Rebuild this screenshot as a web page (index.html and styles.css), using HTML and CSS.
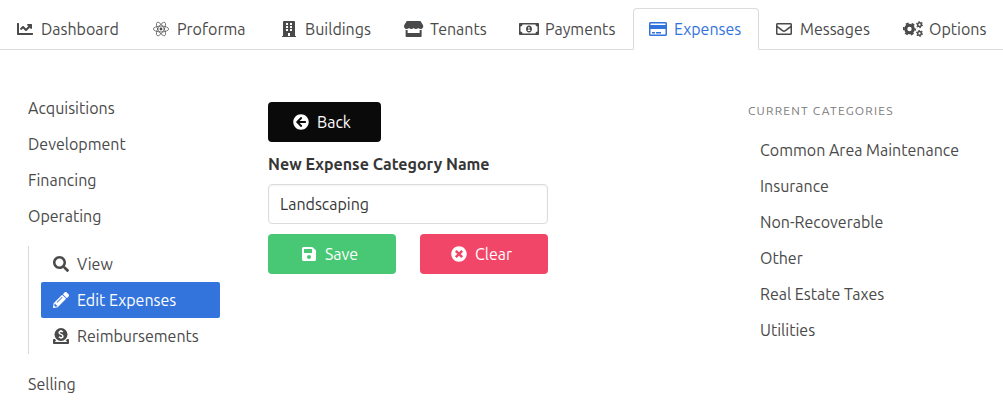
FILE: index.html
```html
<!DOCTYPE html>
<html lang="en">
<head>
<meta charset="utf-8">
<title>Expenses</title>
<link rel="stylesheet" href="styles.css">
</head>
<body>
<nav class="tabs" aria-label="Main">
  <a class="tab" href="#"><span class="icon"><svg viewBox="0 0 512 512"><path d="M496 384H64V80c0-8.840-7.160-16-16-16H16C7.160 64 0 71.160 0 80v336c0 17.670 14.330 32 32 32h464c8.840 0 16-7.160 16-16v-32c0-8.840-7.160-16-16-16zM464 96H345.940c-21.380 0-32.090 25.850-16.970 40.970l32.400 32.400L288 242.750l-73.370-73.370c-12.500-12.500-32.760-12.500-45.250 0l-68.690 68.690c-6.250 6.250-6.250 16.380 0 22.630l22.620 22.620c6.250 6.250 16.380 6.250 22.630 0L192 237.250l73.370 73.370c12.500 12.500 32.760 12.500 45.250 0l96-96 32.400 32.400c15.120 15.120 40.970 4.410 40.970-16.970V112c0-8.840-7.160-16-16-16z"/></svg></span>Dashboard</a>
  <a class="tab" href="#"><span class="icon"><svg viewBox="0 0 512 512"><g fill="none" stroke="currentColor" stroke-width="22"><ellipse cx="256" cy="256" rx="244" ry="94"/><ellipse cx="256" cy="256" rx="244" ry="94" transform="rotate(60 256 256)"/><ellipse cx="256" cy="256" rx="244" ry="94" transform="rotate(120 256 256)"/></g><circle cx="256" cy="256" r="45"/></svg></span>Proforma</a>
  <a class="tab" href="#"><span class="icon"><svg viewBox="0 0 448 512"><path fill-rule="evenodd" d="M436 480h-20V24c0-13-11-24-24-24H56C43 0 32 11 32 24v456H12c-7 0-12 5-12 12v20h448v-20c0-7-5-12-12-12zM128 64h64v64h-64zM256 64h64v64h-64zM128 160h64v64h-64zM256 160h64v64h-64zM128 256h64v64h-64zM256 256h64v64h-64zM192 384h64v96h-64z"/></svg></span>Buildings</a>
  <a class="tab" href="#"><span class="icon"><svg viewBox="0 0 616 512"><path d="M602 118.600L537.100 15C531.300 5.700 521 0 510 0H106C95 0 84.700 5.700 78.900 15L14 118.600c-33.500 53.500-3.800 127.900 58.800 136.400 4.500.6 9.100.9 13.700.9 29.600 0 55.800-13 73.800-33.100 18 20.100 44.300 33.100 73.800 33.100 29.600 0 55.800-13 73.800-33.100 18 20.100 44.300 33.100 73.800 33.100 29.600 0 55.800-13 73.800-33.100 18.100 20.100 44.300 33.100 73.800 33.100 4.700 0 9.200-.3 13.700-.9 62.800-8.400 92.600-82.800 59-136.400zM529.500 288c-10 0-19.900-1.500-29.500-3.800V384H116v-99.800c-9.600 2.200-19.500 3.800-29.500 3.800-6 0-12.100-.4-18-1.200-5.600-.8-11.100-2.100-16.400-3.600V480c0 17.700 14.300 32 32 32h448c17.700 0 32-14.300 32-32V283.200c-5.400 1.600-10.800 2.900-16.400 3.600-6.100.8-12.100 1.200-18.200 1.200z"/></svg></span>Tenants</a>
  <a class="tab" href="#"><span class="icon"><svg viewBox="0 0 640 512"><path fill-rule="evenodd" d="M608 64H32C14 64 0 78 0 96v320c0 18 14 32 32 32h576c18 0 32-14 32-32V96c0-18-14-32-32-32zm-16 272c-35 0-64 29-64 64H112c0-35-29-64-64-64V176c35 0 64-29 64-64h416c0 35 29 64 64 64z"/><path fill-rule="evenodd" d="M320 144c-53 0-96 50-96 112s43 112 96 112 96-50 96-112-43-112-96-112zm-40 176v-32h24v-56h-20v-26l34-14h18v96h24v32z"/></svg></span>Payments</a>
  <a class="tab tab-active" href="#" aria-current="page"><span class="icon"><svg viewBox="0 0 576 512"><path fill-rule="evenodd" d="M528 32H48C21 32 0 54 0 80v352c0 26 21 48 48 48h480c27 0 48-22 48-48V80c0-26-21-48-48-48zM54 80h468c3 0 6 3 6 6v42H48V86c0-3 3-6 6-6zm468 352H54c-3 0-6-3-6-6V256h480v170c0 3-3 6-6 6z"/><path d="M96 352h96v48H96zM224 352h160v48H224z"/></svg></span>Expenses</a>
  <a class="tab" href="#"><span class="icon"><svg viewBox="0 0 512 512"><path d="M464 64H48C21.490 64 0 85.490 0 112v288c0 26.510 21.490 48 48 48h416c26.510 0 48-21.490 48-48V112c0-26.510-21.490-48-48-48zm0 48v40.805c-22.422 18.259-58.168 46.651-134.587 106.490-16.841 13.247-50.201 45.072-73.413 44.701-23.208.375-56.579-31.459-73.413-44.701C106.180 199.465 70.425 171.067 48 152.805V112h416zM48 400V214.398c22.914 18.251 55.409 43.862 104.938 82.646 21.857 17.205 60.134 55.186 103.062 54.955 42.717.231 80.509-37.199 103.053-54.947 49.528-38.783 82.032-64.401 104.947-82.653V400H48z"/></svg></span>Messages</a>
  <a class="tab" href="#"><span class="icon"><svg viewBox="0 0 640 512"><g fill="none" stroke="currentColor"><circle cx="208" cy="256" r="120" stroke-width="100"/><circle cx="208" cy="256" r="184" stroke-width="56" stroke-dasharray="96 96.700" stroke-dashoffset="48"/><circle cx="528" cy="116" r="58" stroke-width="46"/><circle cx="528" cy="116" r="94" stroke-width="36" stroke-dasharray="49 49.400"/><circle cx="528" cy="396" r="58" stroke-width="46"/><circle cx="528" cy="396" r="94" stroke-width="36" stroke-dasharray="49 49.400"/></g></svg></span>Options</a>
</nav>

<main class="columns">
  <aside class="sidebar">
    <ul class="menu">
      <li><a class="menu-link" href="#">Acquisitions</a></li>
      <li><a class="menu-link" href="#">Development</a></li>
      <li><a class="menu-link" href="#">Financing</a></li>
      <li><a class="menu-link" href="#">Operating</a>
        <ul class="submenu">
          <li><a class="menu-link" href="#"><span class="icon"><svg viewBox="0 0 512 512"><path d="M505 442.700L405.300 343c-4.500-4.500-10.600-7-17-7H372c27.600-35.300 44-79.700 44-128C416 93.100 322.900 0 208 0S0 93.100 0 208s93.100 208 208 208c48.300 0 92.700-16.400 128-44v16.300c0 6.400 2.500 12.500 7 17l99.700 99.700c9.400 9.400 24.600 9.400 33.900 0l28.300-28.300c9.400-9.400 9.400-24.600.1-34zM208 336c-70.700 0-128-57.200-128-128 0-70.700 57.200-128 128-128 70.700 0 128 57.200 128 128 0 70.700-57.200 128-128 128z"/></svg></span>View</a></li>
          <li><a class="menu-link menu-link-active" href="#" aria-current="page"><span class="icon"><svg viewBox="0 0 512 512"><path d="M497.900 142.100l-46.100 46.100c-4.700 4.700-12.300 4.700-17 0l-111-111c-4.700-4.700-4.700-12.300 0-17l46.100-46.100c18.700-18.700 49.100-18.700 67.900 0l60.100 60.100c18.800 18.700 18.800 49.100 0 67.900zM284.200 99.800L21.600 362.400.4 483.900c-2.900 16.400 11.400 30.600 27.800 27.800l121.500-21.300 262.600-262.600c4.700-4.700 4.700-12.300 0-17l-111-111c-4.800-4.700-12.400-4.700-17.100 0zM124.100 339.900c-5.500-5.500-5.500-14.300 0-19.800l154-154c5.500-5.500 14.300-5.500 19.800 0s5.500 14.300 0 19.800l-154 154c-5.500 5.500-14.300 5.500-19.800 0zM88 424h48v36.300l-64.500 11.300-31.100-31.100L51.700 376H88v48z"/></svg></span>Edit Expenses</a></li>
          <li><a class="menu-link" href="#"><span class="icon"><svg viewBox="0 0 512 512"><circle cx="256" cy="208" r="208"/><path class="cutout" d="M318 130c-20-18-42-25-64-25-38 0-61 20-61 47 0 66 126 42 126 109 0 29-25 48-64 48-25 0-48-9-65-27M256 66v40M256 308v38"/><path d="M480 352h-32c-10 24-26 46-45 64h28c6 0 10 4 10 8v16c0 4-4 8-10 8H81c-6 0-10-4-10-8v-16c0-4 4-8 10-8h28c-19-18-35-40-45-64H32c-18 0-32 14-32 32v96c0 18 14 32 32 32h448c18 0 32-14 32-32v-96c0-18-14-32-32-32z"/></svg></span>Reimbursements</a></li>
        </ul>
      </li>
      <li><a class="menu-link" href="#">Selling</a></li>
    </ul>
  </aside>

  <form class="form">
    <button class="button button-back" type="button"><span class="icon"><svg viewBox="0 0 512 512"><path d="M256 504C119 504 8 393 8 256S119 8 256 8s248 111 248 248-111 248-248 248zm28.900-143.600L209.400 288H392c13.300 0 24-10.700 24-24v-16c0-13.300-10.700-24-24-24H209.400l75.500-72.400c9.700-9.300 9.900-24.800.4-34.300l-11-10.900c-9.400-9.400-24.600-9.400-33.900 0L107.700 239c-9.400 9.400-9.400 24.600 0 33.900l132.700 132.700c9.400 9.400 24.600 9.400 33.900 0l11-10.900c9.500-9.500 9.300-25-.4-34.300z"/></svg></span>Back</button>
    <label class="label" for="category">New Expense Category Name</label>
    <input class="input" id="category" type="text" value="Landscaping">
    <div class="actions">
      <button class="button button-save" type="submit"><span class="icon"><svg viewBox="0 0 448 512"><path d="M433.941 129.941l-83.882-83.882A48 48 0 0 0 316.118 32H48C21.490 32 0 53.490 0 80v352c0 26.510 21.490 48 48 48h352c26.510 0 48-21.490 48-48V163.882a48 48 0 0 0-14.059-33.941zM224 416c-35.346 0-64-28.654-64-64 0-35.346 28.654-64 64-64s64 28.654 64 64c0 35.346-28.654 64-64 64zm96-304.520V212c0 6.627-5.373 12-12 12H76c-6.627 0-12-5.373-12-12V108c0-6.627 5.373-12 12-12h228.520c3.183 0 6.235 1.264 8.485 3.515l3.480 3.480A11.996 11.996 0 0 1 320 111.480z"/></svg></span>Save</button>
      <button class="button button-clear" type="reset"><span class="icon"><svg viewBox="0 0 512 512"><path d="M256 8C119 8 8 119 8 256s111 248 248 248 248-111 248-248S393 8 256 8zm121.600 313.100c4.700 4.700 4.700 12.300 0 17L338 377.600c-4.700 4.700-12.300 4.700-17 0L256 312l-65.100 65.600c-4.700 4.700-12.300 4.700-17 0L134.400 338c-4.700-4.700-4.700-12.300 0-17l65.600-65-65.600-65.100c-4.700-4.700-4.700-12.300 0-17l39.600-39.600c4.700-4.700 12.300-4.700 17 0l65 65.700 65.100-65.600c4.700-4.700 12.300-4.700 17 0l39.600 39.600c4.700 4.700 4.700 12.300 0 17L312 256l65.600 65.100z"/></svg></span>Clear</button>
    </div>
  </form>

  <section class="categories">
    <h2 class="categories-title">Current Categories</h2>
    <ul class="categories-list">
      <li>Common Area Maintenance</li>
      <li>Insurance</li>
      <li>Non-Recoverable</li>
      <li>Other</li>
      <li>Real Estate Taxes</li>
      <li>Utilities</li>
    </ul>
  </section>
</main>
</body>
</html>
```

FILE: styles.css
```css
* {
  box-sizing: border-box;
}

body {
  margin: 0;
  background: #fff;
  color: #4a4a4a;
  font: 16px/24px Ubuntu, "Noto Sans", sans-serif;
}

a {
  color: inherit;
  text-decoration: none;
}

ul {
  list-style: none;
  margin: 0;
  padding: 0;
}

.icon {
  display: inline-flex;
  flex: none;
  justify-content: center;
  width: 16px;
  height: 16px;
}

.icon svg {
  flex: none;
  height: 16px;
  fill: currentColor;
}

.cutout {
  fill: none;
  stroke: #fff;
  stroke-width: 44;
}

.tabs {
  display: grid;
  grid-template-columns: 136fr 128fr 125fr 115fr 129fr 126fr 129fr 115fr;
  padding-top: 8px;
  border-bottom: 1px solid #dbdbdb;
}

.tab {
  display: flex;
  align-items: center;
  gap: 8px;
  margin-bottom: -1px;
  padding: 8px 0 8px 16px;
  border: 1px solid transparent;
  border-radius: 4px 4px 0 0;
  white-space: nowrap;
}

.tab-active {
  border-color: #dbdbdb;
  border-bottom-color: #fff;
  background: #fff;
  color: #3273dc;
}

.columns {
  display: grid;
  grid-template-columns: 1fr 2fr 1fr;
  padding: 40px 15px 16px 28px;
}

.sidebar {
  margin: 0 36px 0 -12px;
}

.menu-link {
  display: flex;
  align-items: center;
  gap: 8px;
  padding: 6px 12px;
  border-radius: 2px;
}

.menu-link-active {
  background: #3273dc;
  color: #fff;
}

.submenu {
  margin: 12px;
  padding-left: 12px;
  border-left: 1px solid #dbdbdb;
}

.form {
  display: flex;
  flex-direction: column;
  width: 280px;
  padding-top: 12px;
}

.button {
  display: flex;
  align-items: center;
  justify-content: center;
  gap: 8px;
  height: 40px;
  padding: 0 30px 0 25px;
  border: 0;
  border-radius: 4px;
  color: #fff;
  font: inherit;
}

.button-back {
  align-self: flex-start;
  background: #0a0a0a;
}

.button-save {
  background: #48c774;
}

.button-clear {
  background: #f14668;
}

.label {
  margin: 10px 0 8px;
  color: #363636;
  font-weight: 700;
  white-space: nowrap;
}

.input {
  width: 100%;
  height: 40px;
  padding: 0 11px;
  border: 1px solid #dbdbdb;
  border-radius: 4px;
  box-shadow: inset 0 1px 2px rgba(10, 10, 10, 0.05);
  color: #363636;
  font: inherit;
}

.actions {
  display: grid;
  grid-template-columns: 1fr 1fr;
  gap: 24px;
  margin-top: 10px;
}

.categories {
  padding-top: 12px;
}

.categories-title {
  margin: 0 0 12px;
  color: #7a7a7a;
  font-size: 12px;
  font-weight: 400;
  line-height: 18px;
  letter-spacing: 0.1em;
  text-transform: uppercase;
}

.categories-list li {
  padding: 6px 12px;
}
```
